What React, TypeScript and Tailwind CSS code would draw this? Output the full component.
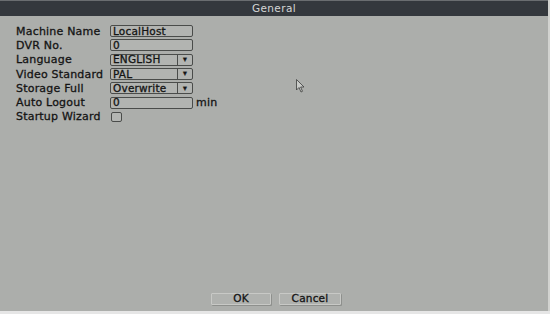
import React from "react";

const rows = [
  { label: "Machine Name", type: "text", value: "LocalHost" },
  { label: "DVR No.", type: "text", value: "0" },
  { label: "Language", type: "select", value: "ENGLISH" },
  { label: "Video Standard", type: "select", value: "PAL" },
  { label: "Storage Full", type: "select", value: "Overwrite" },
  { label: "Auto Logout", type: "min", value: "0" },
  { label: "Startup Wizard", type: "check", value: "" },
];

function Field({ type, value }: { type: string; value: string }) {
  if (type === "check") {
    return <div className="ml-[1px] h-[10px] w-[11px] rounded-[2px] border border-[#4a4c4a] bg-[#b4b6b3]" />;
  }
  return (
    <div className="flex items-center">
      <div className="flex h-[12px] w-[83px] items-center rounded-[2px] border border-[#4a4c4a] bg-[#b2b4b1] text-[10.5px]">
        <span className="flex-1 pl-[2px] leading-none">{value}</span>
        {type === "select" && (
          <span className="flex h-full w-[15px] items-center justify-center border-l border-[#4a4c4a] text-[5px]">▼</span>
        )}
      </div>
      {type === "min" && <span className="ml-[3px] leading-none">min</span>}
    </div>
  );
}

export default function App() {
  return (
    <div
      className="relative flex h-[314px] w-[550px] flex-col bg-[#e6e6e6] text-[#141414]"
      style={{ fontFamily: '"DejaVu Sans", sans-serif' }}
    >
      <div className="flex h-[311px] flex-col border-r-[2px] border-[#d2d3d0] bg-[#acaeab]">
        <div className="flex h-[16px] items-center justify-center border-t border-[#6a6d70] bg-[#34383d] text-[10.5px] tracking-[0.4px] text-[#d4d6d6]">
          General
        </div>
        <div className="flex flex-1 flex-col">
          <div className="flex flex-col gap-[2px] pl-[16px] pt-[9px] text-[11px] tracking-[0.2px] [-webkit-text-stroke:0.3px_#141414]">
            {rows.map((r) => (
              <div key={r.label} className="flex h-[12.3px] items-center">
                <span className="w-[94px] leading-none">{r.label}</span>
                <Field type={r.type} value={r.value} />
              </div>
            ))}
          </div>
          <div className="flex-1" />
          <div className="flex justify-center gap-[8px] pb-[6px] pl-[4px] text-[10.5px] tracking-[0.2px] [-webkit-text-stroke:0.3px_#141414]">
            <div className="flex h-[12px] w-[60px] items-center justify-center rounded-[1px] border border-[#c8c9c6] bg-[#b0b2af] shadow-[1px_1px_0_#8e908d]">OK</div>
            <div className="flex h-[12px] w-[62px] items-center justify-center rounded-[1px] border border-[#c8c9c6] bg-[#b0b2af] shadow-[1px_1px_0_#8e908d]">Cancel</div>
          </div>
        </div>
      </div>
      <svg className="absolute left-[296px] top-[79px]" width="10" height="14" viewBox="0 0 10 14">
        <path d="M0.5 0.5 L0.5 11 L3 8.5 L5 13 L6.5 12.3 L4.6 8 L8 8 Z" fill="#c9cbc8" stroke="#3c3e3c" strokeWidth="0.8" />
      </svg>
    </div>
  );
}
